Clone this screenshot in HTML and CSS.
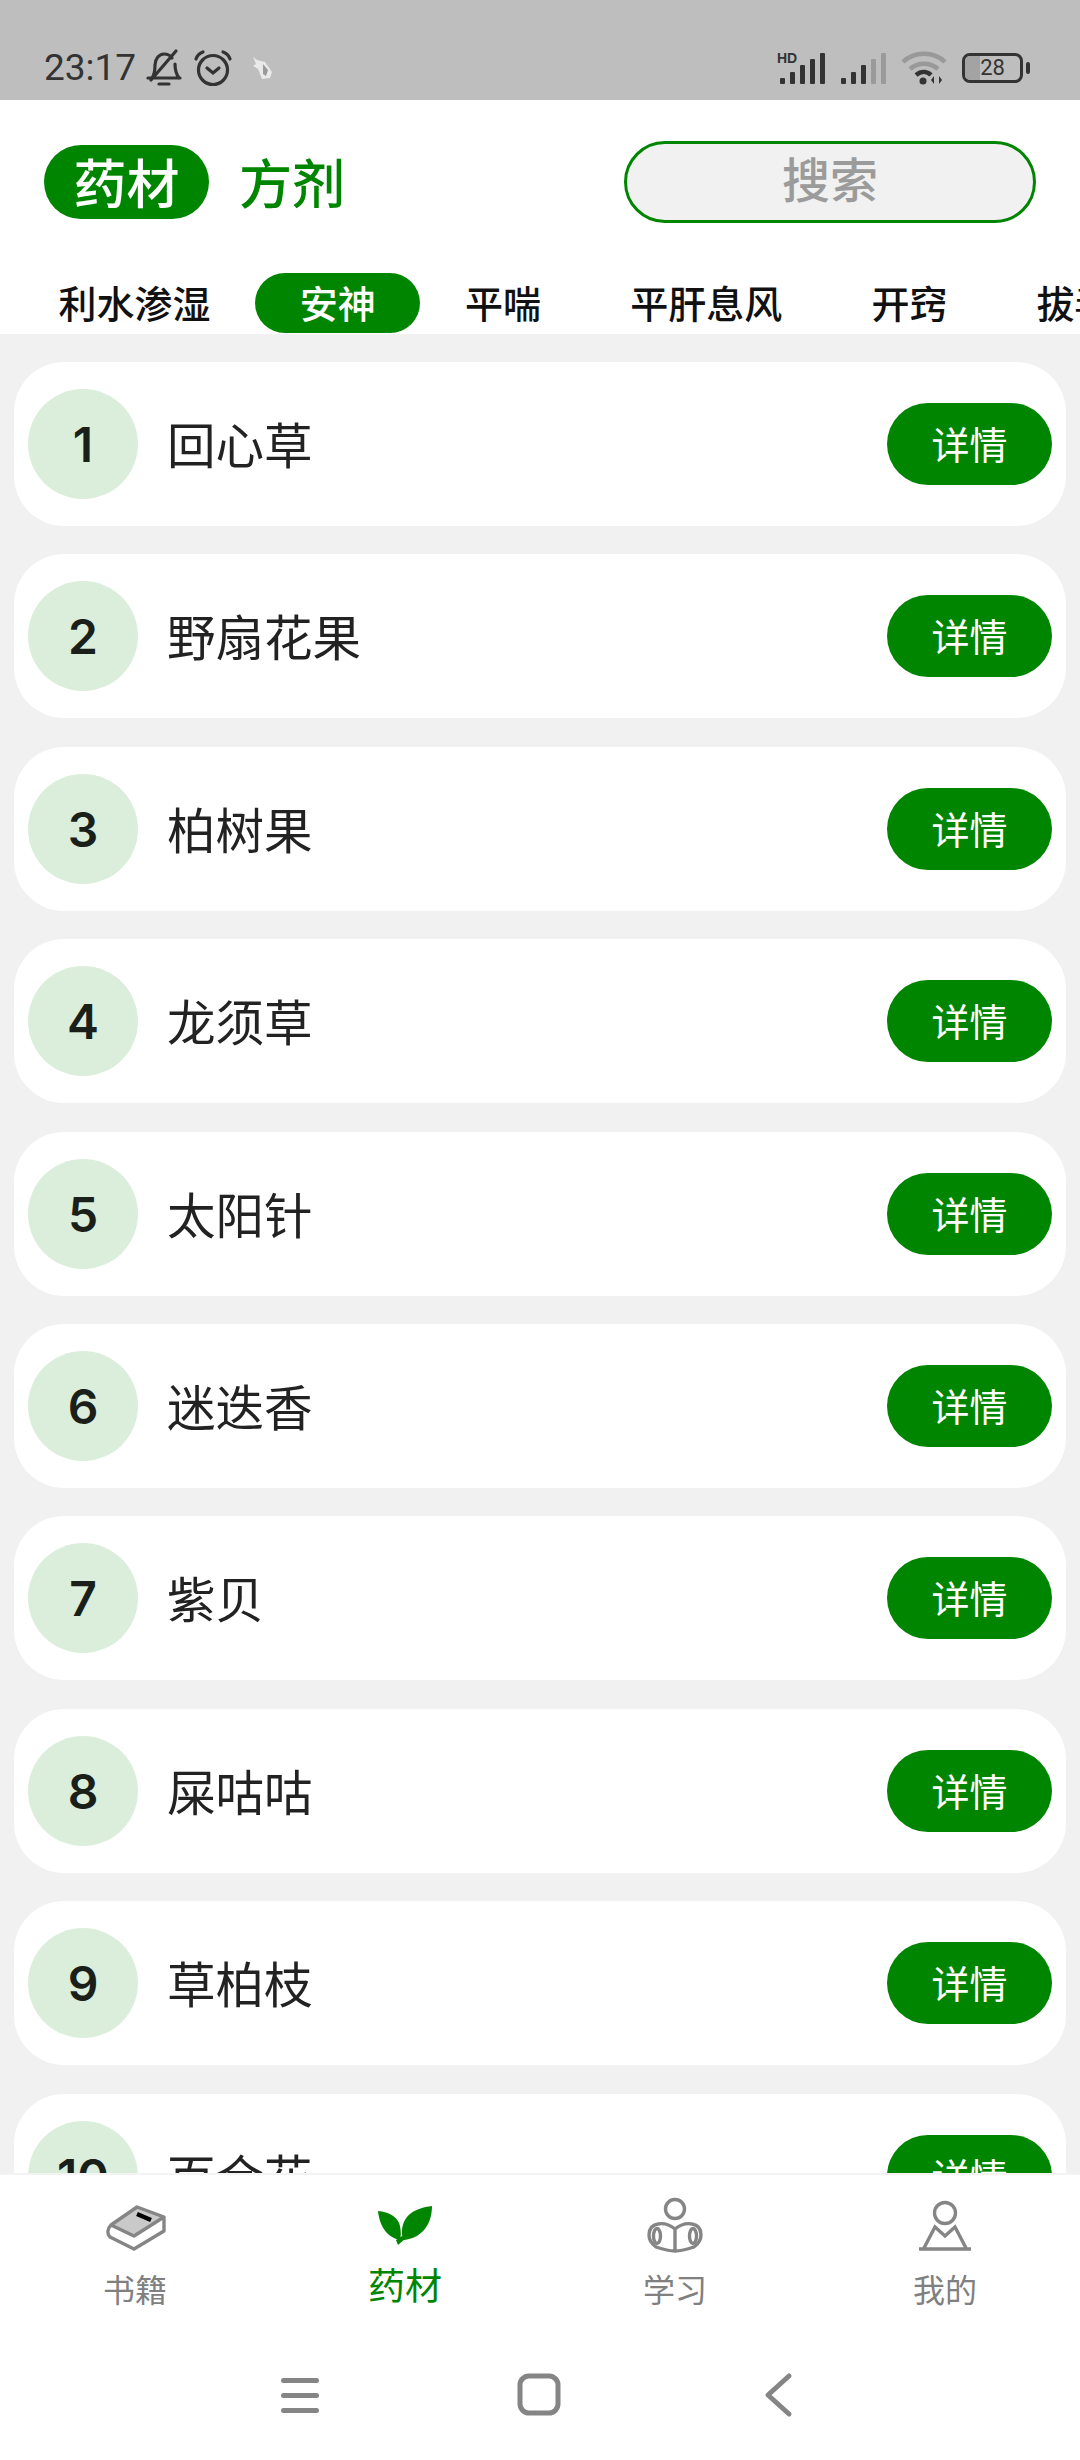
FILE: index.html
```html
<!DOCTYPE html>
<html lang="en">
<head>
  <meta charset="UTF-8">
  <meta name="viewport" content="width=device-width, initial-scale=1">
  <title>药材</title>
  <link rel="stylesheet" href="styles.css">
</head>
<body>
  <!-- Status bar -->
  <div class="status-bar">
    <span class="time">23:17</span>
    <svg class="st-bell" width="38" height="40" viewBox="0 0 38 40" fill="none" stroke="#333" stroke-width="3.2">
      <path d="M3 30h32M7 30c3-4 3-8 3-13 0-6 4-11 9-11 3 0 6 1 8 4M30 16c0 5 1 10 4 14M6 32L31 3" stroke-linecap="round"/>
      <path d="M14 36h10" stroke-linecap="round"/>
    </svg>
    <svg class="st-alarm" width="40" height="40" viewBox="0 0 40 40" fill="none" stroke="#333" stroke-width="3.2">
      <circle cx="20" cy="22" r="14.5"/>
      <path d="M14 20l6 5 6-5M3 11c1-3 4-6 7-7M37 11c-1-3-4-6-7-7" stroke-linecap="round"/>
    </svg>
    <svg class="st-cursor" width="24" height="24" viewBox="0 0 24 24">
      <path d="M4 1l4 3 8 2 7 10-2 6-8 1-4-10-5-3 3-2z" fill="#e9e9e9"/>
      <path d="M14 8l5 6-2 6-3-2z" fill="#9a9a9a"/>
    </svg>
    <div class="st-right">
      <svg width="50" height="34" viewBox="0 0 50 34">
        <text class="hd" x="0" y="12">HD</text>
        <g fill="#333">
          <rect x="3" y="27" width="5" height="6" rx="1"/><rect x="13" y="21" width="5" height="12" rx="1"/>
          <rect x="23" y="14" width="5" height="19" rx="1"/><rect x="33" y="8" width="5" height="25" rx="1"/>
          <rect x="43" y="2" width="5" height="31" rx="1"/>
        </g>
      </svg>
      <svg width="48" height="34" viewBox="0 0 48 34">
        <g fill="#333">
          <rect x="1" y="27" width="5" height="6" rx="1"/><rect x="11" y="21" width="5" height="12" rx="1"/>
          <rect x="21" y="14" width="5" height="19" rx="1"/>
        </g>
        <g fill="#9a9a9a">
          <rect x="31" y="8" width="5" height="25" rx="1"/><rect x="41" y="2" width="5" height="31" rx="1"/>
        </g>
      </svg>
      <svg width="46" height="36" viewBox="0 0 46 36" fill="none">
        <path d="M2 12C13 1 33 1 44 12" stroke="#999" stroke-width="4.5"/>
        <path d="M9 19c8-7 20-7 28 0" stroke="#999" stroke-width="4.5"/>
        <path d="M15 25c5-4 11-4 15 0" stroke="#333" stroke-width="4.5"/>
        <circle cx="22" cy="31" r="3.5" fill="#333"/>
        <path d="M33 34v-8l-3 4zM38 26v8l3-4z" fill="#333"/>
      </svg>
      <div class="battery">
        <div class="battery-box"><span class="battery-fill"></span><span class="battery-num">28</span></div>
        <span class="battery-nub"></span>
      </div>
    </div>
  </div>

  <!-- Header -->
  <div class="header">
    <div class="head-row">
      <span class="type-tab active">药材</span>
      <span class="type-tab">方剂</span>
      <div class="search">搜索</div>
    </div>
    <div class="cats">
      <span class="cat">利水渗湿</span>
      <span class="cat active">安神</span>
      <span class="cat">平喘</span>
      <span class="cat">平肝息风</span>
      <span class="cat">开窍</span>
      <span class="cat">拔毒</span>
    </div>
  </div>

  <!-- Herb list -->
  <div class="list">
    <div class="card"><span class="num">1</span><span class="name">回心草</span><span class="btn">详情</span></div>
    <div class="card"><span class="num">2</span><span class="name">野扇花果</span><span class="btn">详情</span></div>
    <div class="card"><span class="num">3</span><span class="name">柏树果</span><span class="btn">详情</span></div>
    <div class="card"><span class="num">4</span><span class="name">龙须草</span><span class="btn">详情</span></div>
    <div class="card"><span class="num">5</span><span class="name">太阳针</span><span class="btn">详情</span></div>
    <div class="card"><span class="num">6</span><span class="name">迷迭香</span><span class="btn">详情</span></div>
    <div class="card"><span class="num">7</span><span class="name">紫贝</span><span class="btn">详情</span></div>
    <div class="card"><span class="num">8</span><span class="name">屎咕咕</span><span class="btn">详情</span></div>
    <div class="card"><span class="num">9</span><span class="name">草柏枝</span><span class="btn">详情</span></div>
    <div class="card"><span class="num">10</span><span class="name">百合花</span><span class="btn">详情</span></div>
  </div>

  <!-- Bottom tabs -->
  <div class="tabbar">
    <div class="tab">
      <svg class="tab-icon" width="62" height="48" viewBox="0 0 62 48" fill="none">
        <path d="M33 3L60 12 30 30 7 19z" fill="#c9c9c9"/>
        <path d="M33 2L60 12v14L30 44 6 32c-3-3-3-8 1-12L33 2zM60 12L30 31 7 20" stroke="#858585" stroke-width="3.4" stroke-linejoin="round"/>
        <path d="M33 9l14 6" stroke="#000" stroke-width="4.5"/>
      </svg>
      <span class="tab-label">书籍</span>
    </div>
    <div class="tab current">
      <svg class="tab-icon" width="56" height="48" viewBox="0 0 56 48" fill="#008500">
        <path d="M1 6c11 1 20 6 22 15 1 5 1 10 0 14C13 33 3 25 1 6z"/>
        <path d="M55 1C37 3 26 11 25 25c0 4 0 7 1 10 16-1 29-13 29-34z"/>
        <path d="M19 35l6-4 3 3-7 6z"/>
      </svg>
      <span class="tab-label">药材</span>
    </div>
    <div class="tab">
      <svg class="tab-icon" width="56" height="56" viewBox="0 3 56 56" fill="none" stroke="#858585" stroke-width="3.4">
        <circle cx="28" cy="11" r="9.5"/>
        <path d="M28 31c-5-4-12-6-17-5-6 1-9 5-9 11 0 6 3 9 7 12 6 2 13 4 19 4 6 0 13-2 19-4 4-3 7-6 7-12 0-6-3-10-9-11-5-1-12 1-17 5zM28 31v21"/>
        <ellipse cx="10" cy="38" rx="3.5" ry="7.5"/>
        <ellipse cx="46" cy="38" rx="3.5" ry="7.5"/>
      </svg>
      <span class="tab-label">学习</span>
    </div>
    <div class="tab">
      <svg class="tab-icon" width="56" height="56" viewBox="0 4 56 56" fill="none" stroke="#858585" stroke-width="3.4">
        <circle cx="28" cy="16" r="10.5"/>
        <path d="M7 51l11-21 10 9 10-9 11 21M2 52h52"/>
      </svg>
      <span class="tab-label">我的</span>
    </div>
  </div>

  <!-- System navigation -->
  <div class="sysnav">
    <svg width="60" height="60" viewBox="0 0 60 60" fill="#858585">
      <rect x="11" y="13" width="38" height="5" rx="2.5"/>
      <rect x="11" y="28" width="38" height="5" rx="2.5"/>
      <rect x="11" y="43" width="38" height="5" rx="2.5"/>
    </svg>
    <svg width="60" height="60" viewBox="0 0 60 60" fill="none" stroke="#858585" stroke-width="5">
      <rect x="10" y="11" width="38" height="37" rx="9"/>
    </svg>
    <svg width="60" height="60" viewBox="0 0 60 60" fill="none" stroke="#858585" stroke-width="5" stroke-linecap="round" stroke-linejoin="round">
      <path d="M39 11L18 30 39 49"/>
    </svg>
  </div>
</body>
</html>
```

FILE: styles.css
```css
/* Reset */
* {
  box-sizing: border-box;
  margin: 0;
  padding: 0;
}

body {
  width: 1080px;
  height: 2460px;
  overflow: hidden;
  display: flex;
  flex-direction: column;
  background-color: #f1f1f1;
  font-family: "Noto Sans CJK SC", "Noto Sans", sans-serif;
}

/* Status bar */
.status-bar {
  height: 100px;
  flex-shrink: 0;
  background-color: #bebebe;
  display: flex;
  align-items: center;
  padding: 36px 0 0 44px;
  color: #333;
}

.time {
  font-family: Roboto, sans-serif;
  font-size: 37px;
  line-height: 44px;
  width: 101px;
}

.st-alarm {
  margin-left: 10px;
}

.st-cursor {
  margin-left: 16px;
}

.st-right {
  margin-left: auto;
  display: flex;
  align-items: center;
  gap: 13px;
  padding-right: 50px;
}

.hd {
  font-family: "Liberation Sans", sans-serif;
  font-size: 14px;
  font-weight: bold;
  fill: #333;
}

.battery {
  display: flex;
  align-items: center;
  margin-left: 2px;
}

.battery-box {
  width: 61px;
  height: 30px;
  border: 3px solid #333;
  border-radius: 8px;
  position: relative;
  display: flex;
  align-items: center;
  justify-content: center;
  overflow: hidden;
}

.battery-fill {
  position: absolute;
  left: 0;
  top: 0;
  bottom: 0;
  width: 15px;
  background-color: #a3a3a3;
}

.battery-num {
  position: relative;
  font-family: Roboto, sans-serif;
  font-size: 22px;
  line-height: 24px;
  color: #333;
}

.battery-nub {
  width: 4px;
  height: 12px;
  border-radius: 2px;
  background-color: #333;
  margin-left: 3px;
}

/* Header */
.header {
  height: 234px;
  flex-shrink: 0;
  background-color: white;
  padding-top: 41px;
  overflow: hidden;
}

.head-row {
  height: 82px;
  display: flex;
  align-items: center;
  padding: 0 44px;
}

.type-tab {
  font-size: 53px;
  font-weight: 500;
  line-height: 72px;
  height: 74px;
  color: #008500;
  margin-left: 30px;
}

.type-tab.active {
  width: 165px;
  margin-left: 0;
  text-align: center;
  color: white;
  background-color: #008500;
  border-radius: 37px;
}

.search {
  width: 412px;
  height: 82px;
  margin-left: auto;
  border: 3px solid #008500;
  border-radius: 41px;
  background-color: #f1f1f1;
  color: #9b9b9b;
  font-size: 48px;
  font-weight: 500;
  line-height: 66px;
  text-align: center;
}

.cats {
  display: flex;
  white-space: nowrap;
  margin-top: 50px;
  padding-left: 14px;
}

.cat {
  flex-shrink: 0;
  padding: 0 44.6px;
  height: 60px;
  font-size: 38px;
  font-weight: 500;
  line-height: 57px;
  color: #111;
  border-radius: 30px;
}

.cat.active {
  color: white;
  background-color: #008500;
}

/* Herb list */
.list {
  flex: 1;
  min-height: 0;
  overflow: hidden;
  padding: 28px 14px 0;
}

.card {
  height: 164px;
  margin-bottom: 28.4px;
  padding: 0 14px;
  display: flex;
  align-items: center;
  background-color: white;
  border-radius: 50px;
}

.num {
  width: 110px;
  height: 110px;
  flex-shrink: 0;
  border-radius: 50%;
  background-color: #dbeedb;
  color: #1a1f1a;
  font-family: Inter, sans-serif;
  font-size: 48px;
  font-weight: 600;
  line-height: 112px;
  text-align: center;
}

.name {
  margin-left: 29px;
  font-size: 48.5px;
  line-height: 65px;
  height: 66px;
  color: #222;
}

.btn {
  width: 165px;
  height: 82px;
  margin-left: auto;
  border-radius: 41px;
  background-color: #008500;
  color: white;
  font-size: 38px;
  line-height: 80px;
  text-align: center;
}

/* Bottom tabs */
.tabbar {
  height: 157px;
  flex-shrink: 0;
  background-color: white;
  border-top: 2px solid #f3f3f3;
  display: grid;
  grid-template-columns: repeat(4, 1fr);
}

.tab {
  display: flex;
  flex-direction: column;
  align-items: center;
  color: #808080;
}

.tab-icon {
  margin-top: 26px;
  height: 56px;
  overflow: visible;
}

.tab-label {
  margin-top: 9px;
  font-size: 32px;
  line-height: 44px;
}

.tab.current {
  color: #008500;
}

.current .tab-label {
  margin-top: 5px;
  font-size: 37px;
}

/* System navigation */
.sysnav {
  height: 130px;
  flex-shrink: 0;
  background-color: white;
  display: flex;
  justify-content: center;
  align-items: flex-start;
  gap: 180px;
  padding-top: 35px;
}
```
